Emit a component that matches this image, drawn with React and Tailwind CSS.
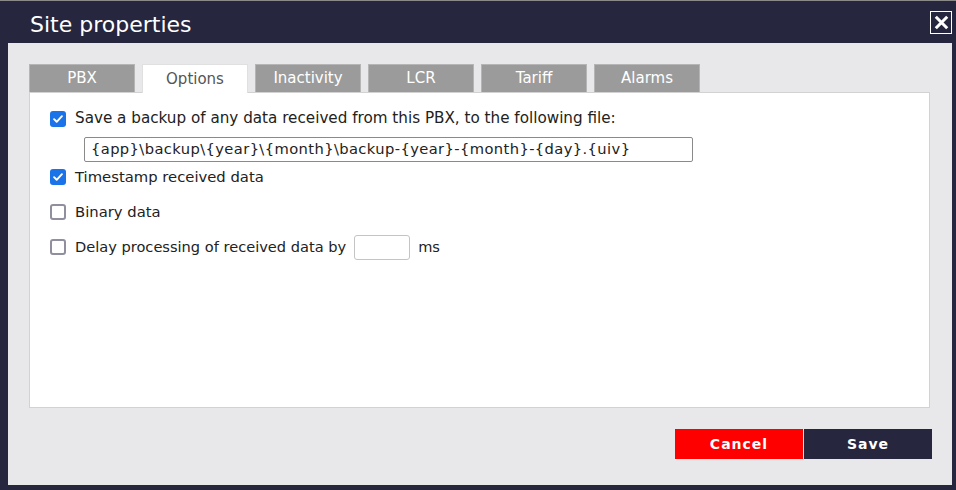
import React from "react";

const tabs = ["PBX", "Options", "Inactivity", "LCR", "Tariff", "Alarms"];

const CheckRow = ({ checked, children, className = "", size = "text-[15.2px]" }) => (
  <label className={`flex items-center gap-[9px] h-[16px] ${className}`}>
    <span
      className={`w-[16px] h-[16px] rounded-[3px] flex items-center justify-center shrink-0 ${
        checked ? "bg-[#1a73e8]" : "bg-white border-2 border-[#8f8f9d]"
      }`}
    >
      {checked && (
        <svg viewBox="0 0 16 16" className="w-[14px] h-[14px]">
          <path
            d="M3.5 8.2l3 3 6-6.4"
            fill="none"
            stroke="white"
            strokeWidth="2.2"
            strokeLinecap="round"
            strokeLinejoin="round"
          />
        </svg>
      )}
    </span>
    <span className={`${size} text-[#222] leading-none whitespace-nowrap`}>{children}</span>
  </label>
);

const App = () => {
  return (
    <div
      className="w-[956px] h-[490px] bg-[#26263f] flex flex-col border-t border-[#8a8a8a]"
      style={{ fontFamily: '"DejaVu Sans", Verdana, sans-serif' }}
    >
      {/* Title bar */}
      <div className="h-[42px] flex items-center justify-between pl-[30px] pr-[4px]">
        <h1 className="text-[22px] text-white leading-none pt-[6px]">Site properties</h1>
        <button className="w-[22px] h-[23px] border border-white flex items-center justify-center mt-[1px]">
          <svg viewBox="0 0 20 20" className="w-[19px] h-[19px]">
            <path
              d="M4 4l12 12M16 4L4 16"
              stroke="white"
              strokeWidth="3.2"
              fill="none"
            />
          </svg>
        </button>
      </div>

      {/* Body */}
      <div className="flex-1 ml-[8px] mr-[4px] mb-[5px] bg-[#e8e8ea] pt-[21px] pl-[21px] pr-[22px] flex flex-col">
        <div className="flex gap-[7px]">
          {tabs.map((t) => (
            <div
              key={t}
              className={`w-[106px] h-[28px] flex items-center justify-center text-[15px] border border-b-0 ${
                t === "Options"
                  ? "bg-white text-[#555] border-[#e0e0e0] h-[29px] -mb-px relative z-10"
                  : "bg-[#9b9b9b] text-white border-[#b5b5b5]"
              }`}
            >
              {t}
            </div>
          ))}
        </div>
        <div className="h-[316px] bg-white border border-[#d2d2d2] pt-[18px] pl-[20px] flex flex-col">
          <CheckRow checked>
            Save a backup of any data received from this PBX, to the following file:
          </CheckRow>
          <div className="ml-[34px] mt-[10px] w-[609px] h-[25px] border border-[#8a8a8a] rounded-[2px] flex items-center pl-[6px] text-[14.7px] tracking-[0.4px] text-[#222] whitespace-nowrap">
            {"{app}\\backup\\{year}\\{month}\\backup-{year}-{month}-{day}.{uiv}"}
          </div>
          <CheckRow checked className="mt-[7px]" size="text-[14.8px]">
            Timestamp received data
          </CheckRow>
          <CheckRow className="mt-[19px]" size="text-[14.8px]">
            Binary data
          </CheckRow>
          <CheckRow className="mt-[19px]" size="text-[14.6px]">
            <span className="flex items-center">
              Delay processing of received data by
              <span className="inline-block w-[56px] h-[25px] border border-[#c4c4c4] rounded-[3px] mx-[8px]" />
              ms
            </span>
          </CheckRow>
        </div>
        <div className="flex justify-end mt-[21px] -mr-[2px]">
          <button className="w-[128px] h-[30px] bg-[#ff0000] text-white text-[14px] font-bold tracking-[1px]">
            Cancel
          </button>
          <button className="w-[128px] h-[30px] ml-[1px] bg-[#26263f] text-white text-[14px] font-bold tracking-[1px]">
            Save
          </button>
        </div>
      </div>
    </div>
  );
};

export default App;
